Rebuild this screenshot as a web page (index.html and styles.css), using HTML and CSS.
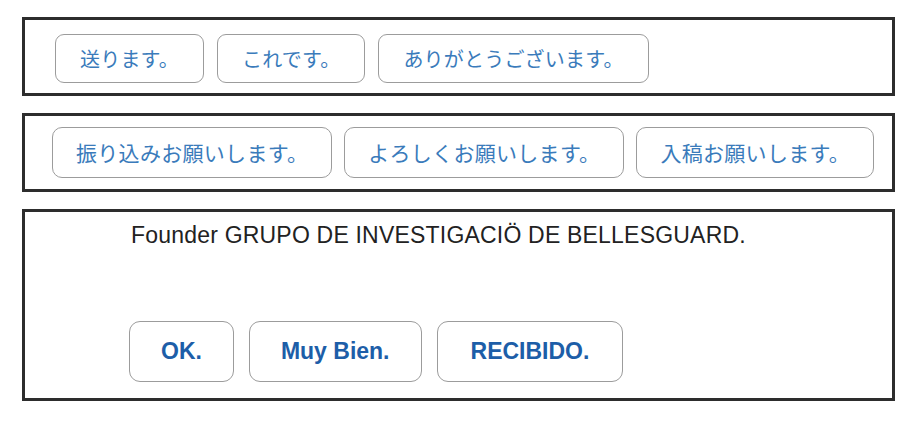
FILE: index.html
```html
<!DOCTYPE html>
<html lang="ja">
<head>
<meta charset="utf-8">
<title>Buttons</title>
<link rel="stylesheet" href="styles.css">
</head>
<body>
<div class="page">
  <div class="box box-one">
    <button class="btn btn-jp1">送ります。</button>
    <button class="btn btn-jp1">これです。</button>
    <button class="btn btn-jp1">ありがとうございます。</button>
  </div>
  <div class="box box-two">
    <button class="btn btn-jp2">振り込みお願いします。</button>
    <button class="btn btn-jp2">よろしくお願いします。</button>
    <button class="btn btn-jp2">入稿お願いします。</button>
  </div>
  <div class="box box-three">
    <p class="title">Founder GRUPO DE INVESTIGACIÖ DE BELLESGUARD.</p>
    <div class="actions">
      <button class="btn btn-en">OK.</button>
      <button class="btn btn-en">Muy Bien.</button>
      <button class="btn btn-en">RECIBIDO.</button>
    </div>
  </div>
</div>
</body>
</html>
```

FILE: styles.css
```css
* { box-sizing: border-box; }
html, body { margin: 0; padding: 0; background: #ffffff; }
.page {
  padding: 17px 0 0 22px;
  display: flex;
  flex-direction: column;
  gap: 17px;
}
.box {
  width: 873px;
  border: 3px solid #2d2d2d;
  background: #fff;
}
.box-one {
  display: flex;
  gap: 13px;
  padding: 14px 0 10px 30px;
}
.box-two {
  display: flex;
  gap: 12px;
  padding: 11px 0 11px 27px;
}
.box-three {
  padding: 11px 0 16px 104px;
}
.btn {
  margin: 0;
  background: #fff;
  border: 1px solid #9c9c9c;
  cursor: pointer;
  white-space: nowrap;
}
.btn-jp1 {
  height: 49px;
  padding: 0 24px;
  border-radius: 9px;
  font-family: "Noto Sans CJK JP", "Noto Sans", sans-serif;
  font-size: 20px;
  letter-spacing: 0.2px;
  line-height: 47px;
  color: #3a7bbb;
}
.btn-jp2 {
  height: 51px;
  padding: 0 23px;
  border-radius: 10px;
  font-family: "Noto Sans CJK JP", "Noto Sans", sans-serif;
  font-size: 21px;
  letter-spacing: 0.3px;
  line-height: 49px;
  color: #3a7bbb;
}
.title {
  margin: 0 0 73px 2px;
  font-family: "Liberation Sans", Arial, sans-serif;
  font-size: 23px;
  letter-spacing: 0.2px;
  line-height: 25px;
  color: #222;
}
.actions {
  display: flex;
  gap: 15px;
}
.btn-en {
  height: 61px;
  padding: 0 31px;
  border-radius: 11px;
  font-family: "Liberation Sans", Arial, sans-serif;
  font-weight: bold;
  font-size: 23px;
  line-height: 59px;
  color: #1d5ea8;
}
.btn-en:last-child {
  padding: 0 33px;
}
```
